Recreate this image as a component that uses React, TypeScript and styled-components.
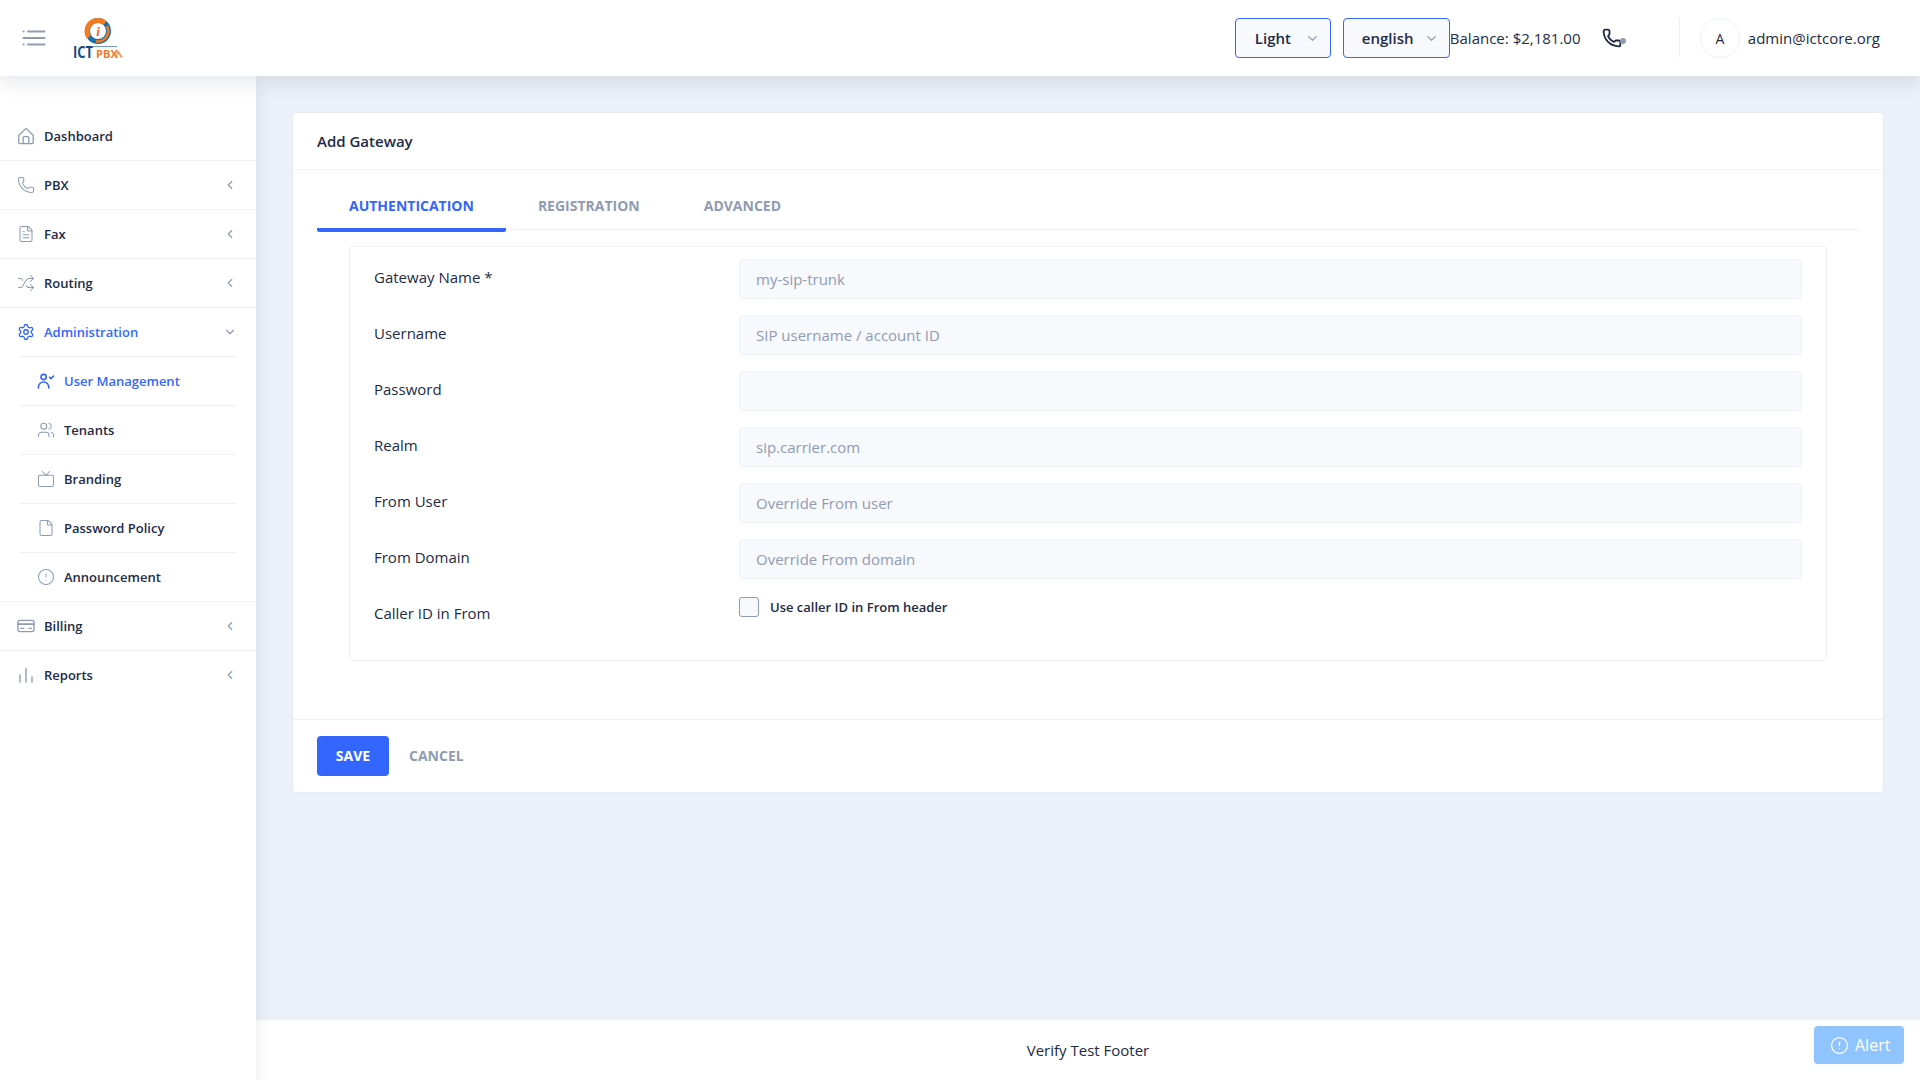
import React from "react";
import styled, { createGlobalStyle } from "styled-components";
import { ChevronDown, ChevronLeft, CircleAlert, File, FileText, Phone, Settings, Shuffle, Tv, Users } from "lucide-react";

const GlobalStyle = createGlobalStyle`
  * { box-sizing: border-box; }
  html, body { margin: 0; padding: 0; height: 100%; }
  body {
    font-family: "Open Sans", "Liberation Sans", sans-serif;
    color: #222b45;
    background: #ecf0f8;
  }
`;

const HomeIcon = () => (
  <svg width="18" height="18" viewBox="0 0 18 18" fill="none" stroke="currentColor" strokeWidth="1.3">
    <path d="M1.8 8.2 9 1.4l7.2 6.8v7.2a1.2 1.2 0 0 1-1.2 1.2H3a1.2 1.2 0 0 1-1.2-1.2z" strokeLinejoin="round" />
    <path d="M6.2 16.6v-6a1 1 0 0 1 1-1h3.6a1 1 0 0 1 1 1v6" />
  </svg>
);

const PersonDoneIcon = () => (
  <svg width="18" height="18" viewBox="0 0 18 18" fill="none" stroke="currentColor" strokeWidth="1.6" strokeLinecap="round" strokeLinejoin="round">
    <circle cx="6.6" cy="5" r="2.6" />
    <path d="M1.4 16v-.8a5.2 5.2 0 0 1 10.4 0v.8" />
    <path d="m12.6 5.2 1.4 1.4 2.6-2.6" />
  </svg>
);

const CardIcon = () => (
  <svg width="18" height="18" viewBox="0 0 18 18" fill="none" stroke="currentColor" strokeWidth="1.3" strokeLinecap="round">
    <rect x="1" y="3.4" width="16" height="11.2" rx="2" />
    <path d="M1 7.2h16" strokeWidth="1.8" />
    <path d="M3.8 11.4h3M12 11.4h2.4" />
  </svg>
);

const BarsIcon = () => (
  <svg width="18" height="18" viewBox="0 0 18 18" fill="none" stroke="currentColor" strokeWidth="1.4" strokeLinecap="round">
    <path d="M3 9v7M9 2.5V16M15 11v5" />
  </svg>
);

const MenuIcon = () => (
  <svg width="24" height="24" viewBox="0 0 24 24" fill="none" stroke="#8f9bb3" strokeWidth="2" strokeLinecap="round">
    <path d="M1.5 5.5h.1M6 5.5h16.5M1.5 12h21M1.5 18.5h.1M6 18.5h16.5" />
  </svg>
);

const LogoMark = styled.svg`
  margin-left: -2px;
  flex: none;
`;

const Logo = () => (
  <LogoMark width="56" height="48" viewBox="-2 -3 56 48" role="img" aria-label="ICT PBX logo">
    <circle cx="26" cy="14" r="10.5" fill="none" stroke="#1b6fa8" strokeWidth="5" />
    <path d="M17 20A10.5 10.5 0 0 1 26 3.5a10.5 10.5 0 0 1 7 2.6" fill="none" stroke="#f47b20" strokeWidth="5" />
    <path d="M35 9a10.5 10.5 0 0 1-11 15.3" fill="none" stroke="#f47b20" strokeWidth="2.5" />
    <circle cx="26" cy="14" r="7.4" fill="#fff" />
    <text x="26" y="19" textAnchor="middle" fontFamily="Liberation Serif" fontStyle="italic" fontWeight="700" fontSize="13" fill="#e8641b">i</text>
    <text x="1" y="40.5" fontFamily="Open Sans" fontWeight="700" fontSize="16" textLength="20" lengthAdjust="spacingAndGlyphs" fill="#17497f">ICT</text>
    <path d="M20 29.6h25" stroke="#6f8fb0" strokeWidth="1" />
    <text x="24" y="40.5" fontFamily="Open Sans" fontWeight="700" fontSize="10.5" textLength="22" lengthAdjust="spacingAndGlyphs" fill="#ef7a2c">PBX</text>
    <path d="M43 40.5 46 33l5 7.5h-2.2L46 36.5l-1.4 4z" fill="#ef7a2c" opacity="0.8" />
  </LogoMark>
);

const Shell = styled.div`
  min-height: 100vh;
  display: grid;
  grid-template-columns: 256px 1fr;
  grid-template-rows: 76px 1fr;
`;

const Header = styled.header`
  grid-column: 1 / 3;
  display: flex;
  align-items: center;
  padding: 0 40px 0 22px;
  background: #fff;
  box-shadow: 0 8px 16px rgba(44, 51, 73, 0.1);
  position: relative;
  z-index: 2;
`;

const MenuButton = styled.div`
  display: flex;
  margin-right: 26px;
`;

const HeaderRight = styled.div`
  margin-left: auto;
  display: flex;
  align-items: center;
`;

const SelectGroup = styled.div`
  display: flex;
  gap: 12px;
`;

const Select = styled.div<{ $width: number; $text: number }>`
  width: ${(p) => p.$width}px;
  height: 40px;
  padding: 0 10px 0 ${(p) => p.$text}px;
  display: flex;
  align-items: center;
  justify-content: space-between;
  background: #f7f9fc;
  border: 1px solid #3366ff;
  border-radius: 4px;
  font-size: 15px;
  font-weight: 600;
  color: #222b45;

  svg {
    color: #8f9bb3;
  }
`;

const Balance = styled.div`
  font-size: 15px;
  width: 152px;
  white-space: nowrap;
`;

const CallStatus = styled.div`
  position: relative;
  display: flex;
  width: 77px;
  color: #222b45;
`;

const StatusDot = styled.span`
  position: absolute;
  left: 18px;
  top: 10px;
  width: 6px;
  height: 6px;
  border-radius: 50%;
  background: #8f9bb3;
`;

const UserBox = styled.div`
  display: flex;
  align-items: center;
  height: 40px;
  padding-left: 20px;
  border-left: 1px solid #edf1f7;
`;

const Avatar = styled.div`
  width: 40px;
  height: 40px;
  margin-right: 8px;
  display: flex;
  align-items: center;
  justify-content: center;
  border: 1px solid #edf1f7;
  border-radius: 50%;
  font-size: 14px;
  font-weight: 400;
`;

const UserName = styled.span`
  font-size: 15px;
  white-space: nowrap;
`;

const Sidebar = styled.nav`
  background: #fff;
  padding-top: 36px;
  box-shadow: 0 8px 16px rgba(44, 51, 73, 0.1);
  position: relative;
  z-index: 1;
`;

const MenuRow = styled.div<{ $active?: boolean; $last?: boolean }>`
  height: ${(p) => (p.$last ? "48px" : "49px")};
  padding: 0 18px;
  display: flex;
  align-items: center;
  border-bottom: ${(p) => (p.$last ? "none" : "1px solid #edf1f7")};
  color: ${(p) => (p.$active ? "#3366ff" : "#222b45")};
  font-size: 13px;
  font-weight: 600;
`;

const SubMenu = styled.div`
  border-bottom: 1px solid #edf1f7;
`;

const AdminRow = styled(MenuRow)`
  height: 48px;
  border-bottom: none;
`;

const SubRow = styled.div<{ $active?: boolean }>`
  height: 49px;
  margin: 0 20px;
  padding-left: 18px;
  display: flex;
  align-items: center;
  border-top: 1px solid #edf1f7;
  color: ${(p) => (p.$active ? "#3366ff" : "#222b45")};
  font-size: 13px;
  font-weight: 600;
`;

const MenuIconBox = styled.span<{ $active?: boolean }>`
  width: 18px;
  height: 18px;
  margin: 0 9px 0 -1px;
  display: flex;
  color: ${(p) => (p.$active ? "#3366ff" : "#8f9bb3")};
`;

const Chevron = styled.span`
  margin-left: auto;
  margin-right: 1px;
  display: flex;
  color: #8f9bb3;
`;

const Main = styled.div`
  display: flex;
  flex-direction: column;
  min-width: 0;
`;

const Content = styled.main`
  flex: 1;
  padding: 36px 36px 0;
`;

const Card = styled.section`
  background: #fff;
  border: 1px solid #e6eaf2;
  border-radius: 4px;
`;

const CardTitle = styled.div`
  height: 57px;
  padding: 0 24px;
  display: flex;
  align-items: center;
  border-bottom: 1px solid #edf1f7;
  font-size: 15px;
  font-weight: 600;
`;

const Body = styled.div`
  padding: 12px 24px 58px;
`;

const Tabs = styled.div`
  height: 48px;
  display: flex;
  border-bottom: 1px solid #edf1f7;
`;

const Tab = styled.div<{ $active?: boolean }>`
  height: 50px;
  padding: 0 32px;
  display: flex;
  align-items: center;
  font-size: 14px;
  font-weight: 700;
  text-transform: uppercase;
  color: ${(p) => (p.$active ? "#3366ff" : "#8f9bb3")};
  border-bottom: 4px solid ${(p) => (p.$active ? "#3366ff" : "transparent")};
  border-radius: 0 0 2px 2px;
`;

const FormBox = styled.div`
  margin: 16px 32px 0;
  padding: 12px 24px 0;
  height: 415px;
  border: 1px solid #edf1f7;
  border-radius: 4px;
  display: grid;
  grid-template-columns: 365px 1fr;
  grid-auto-rows: 40px;
  row-gap: 16px;
`;

const Label = styled.label`
  font-size: 15px;
  line-height: 36px;
`;

const Input = styled.input`
  width: 100%;
  height: 40px;
  padding: 0 16px;
  background: #f7f9fc;
  border: 1px solid #edf1f7;
  border-radius: 4px;
  font: 400 15px "Open Sans", sans-serif;
  color: #222b45;

  &::placeholder {
    color: #8f9bb3;
    opacity: 1;
  }
`;

const CheckRow = styled.div`
  display: flex;
  align-items: flex-start;
  padding-top: 2px;
`;

const CheckBox = styled.span`
  width: 20px;
  height: 20px;
  margin-right: 11px;
  background: #f7f9fc;
  border: 1px solid #8f9bb3;
  border-radius: 3px;
`;

const CheckText = styled.span`
  font-size: 13px;
  font-weight: 600;
  line-height: 20px;
`;

const CardFooter = styled.div`
  padding: 16px 24px;
  display: flex;
  align-items: center;
  border-top: 1px solid #edf1f7;
`;

const SaveButton = styled.button`
  width: 72px;
  height: 40px;
  padding: 0 0 2px;
  background: #3366ff;
  border: 0;
  border-radius: 4px;
  color: #fff;
  font: 700 14px "Open Sans", sans-serif;
`;

const CancelButton = styled.button`
  margin-left: 20px;
  padding: 0 0 2px;
  background: none;
  border: 0;
  color: #8f9bb3;
  font: 700 14px "Open Sans", sans-serif;
`;

const Footer = styled.footer`
  height: 60px;
  display: flex;
  align-items: center;
  justify-content: center;
  background: #fff;
  font-size: 15px;
`;

const AlertButton = styled.div`
  position: fixed;
  right: 16px;
  bottom: 16px;
  width: 90px;
  height: 38px;
  padding-left: 16px;
  display: flex;
  align-items: center;
  gap: 6px;
  background: #90c4ff;
  border-radius: 4px;
  color: #fff;
  font-size: 16px;
`;

type Item = { label: string; icon: React.ReactNode; chevron?: boolean };

const subItems: (Item & { active?: boolean })[] = [
  { label: "User Management", icon: <PersonDoneIcon />, active: true },
  { label: "Tenants", icon: <Users size={18} strokeWidth={1.4} /> },
  { label: "Branding", icon: <Tv size={18} strokeWidth={1.4} /> },
  { label: "Password Policy", icon: <File size={18} strokeWidth={1.4} /> },
  { label: "Announcement", icon: <CircleAlert size={18} strokeWidth={1.4} /> },
];

const fields = [
  { label: "Gateway Name *", placeholder: "my-sip-trunk" },
  { label: "Username", placeholder: "SIP username / account ID" },
  { label: "Password", placeholder: "", type: "password" },
  { label: "Realm", placeholder: "sip.carrier.com" },
  { label: "From User", placeholder: "Override From user" },
  { label: "From Domain", placeholder: "Override From domain" },
];

const Row = ({ item, last }: { item: Item; last?: boolean }) => (
  <MenuRow $last={last}>
    <MenuIconBox>{item.icon}</MenuIconBox>
    {item.label}
    {item.chevron && (
      <Chevron>
        <ChevronLeft size={14} strokeWidth={2} />
      </Chevron>
    )}
  </MenuRow>
);

const App = () => {
  return (
    <Shell>
      <GlobalStyle />
      <Header>
        <MenuButton>
          <MenuIcon />
        </MenuButton>
        <Logo />
        <HeaderRight>
          <SelectGroup>
            <Select $width={96} $text={19}>
              Light <ChevronDown size={15} strokeWidth={2.2} />
            </Select>
            <Select $width={107} $text={18}>
              english <ChevronDown size={15} strokeWidth={2.2} />
            </Select>
          </SelectGroup>
          <Balance>Balance: $2,181.00</Balance>
          <CallStatus>
            <Phone size={20} strokeWidth={2.2} />
            <StatusDot />
          </CallStatus>
          <UserBox>
            <Avatar>A</Avatar>
            <UserName>admin@ictcore.org</UserName>
          </UserBox>
        </HeaderRight>
      </Header>

      <Sidebar>
        <Row item={{ label: "Dashboard", icon: <HomeIcon /> }} />
        <Row item={{ label: "PBX", icon: <Phone size={18} strokeWidth={1.4} />, chevron: true }} />
        <Row item={{ label: "Fax", icon: <FileText size={18} strokeWidth={1.4} />, chevron: true }} />
        <Row item={{ label: "Routing", icon: <Shuffle size={18} strokeWidth={1.4} />, chevron: true }} />
        <SubMenu>
          <AdminRow $active>
            <MenuIconBox $active>
              <Settings size={18} strokeWidth={1.8} />
            </MenuIconBox>
            Administration
            <Chevron>
              <ChevronDown size={14} strokeWidth={2} />
            </Chevron>
          </AdminRow>
          {subItems.map((item) => (
            <SubRow key={item.label} $active={item.active}>
              <MenuIconBox $active={item.active}>{item.icon}</MenuIconBox>
              {item.label}
            </SubRow>
          ))}
        </SubMenu>
        <Row item={{ label: "Billing", icon: <CardIcon />, chevron: true }} />
        <Row item={{ label: "Reports", icon: <BarsIcon />, chevron: true }} last />
      </Sidebar>

      <Main>
        <Content>
          <Card>
            <CardTitle>Add Gateway</CardTitle>
            <Body>
              <Tabs>
                <Tab $active>Authentication</Tab>
                <Tab>Registration</Tab>
                <Tab>Advanced</Tab>
              </Tabs>
              <FormBox>
                {fields.map((field) => (
                  <React.Fragment key={field.label}>
                    <Label>{field.label}</Label>
                    <Input type={field.type ?? "text"} placeholder={field.placeholder} />
                  </React.Fragment>
                ))}
                <Label>Caller ID in From</Label>
                <CheckRow>
                  <CheckBox />
                  <CheckText>Use caller ID in From header</CheckText>
                </CheckRow>
              </FormBox>
            </Body>
            <CardFooter>
              <SaveButton>SAVE</SaveButton>
              <CancelButton>CANCEL</CancelButton>
            </CardFooter>
          </Card>
        </Content>
        <Footer>Verify Test Footer</Footer>
      </Main>

      <AlertButton>
        <CircleAlert size={19} strokeWidth={1.6} />
        Alert
      </AlertButton>
    </Shell>
  );
};

export default App;
